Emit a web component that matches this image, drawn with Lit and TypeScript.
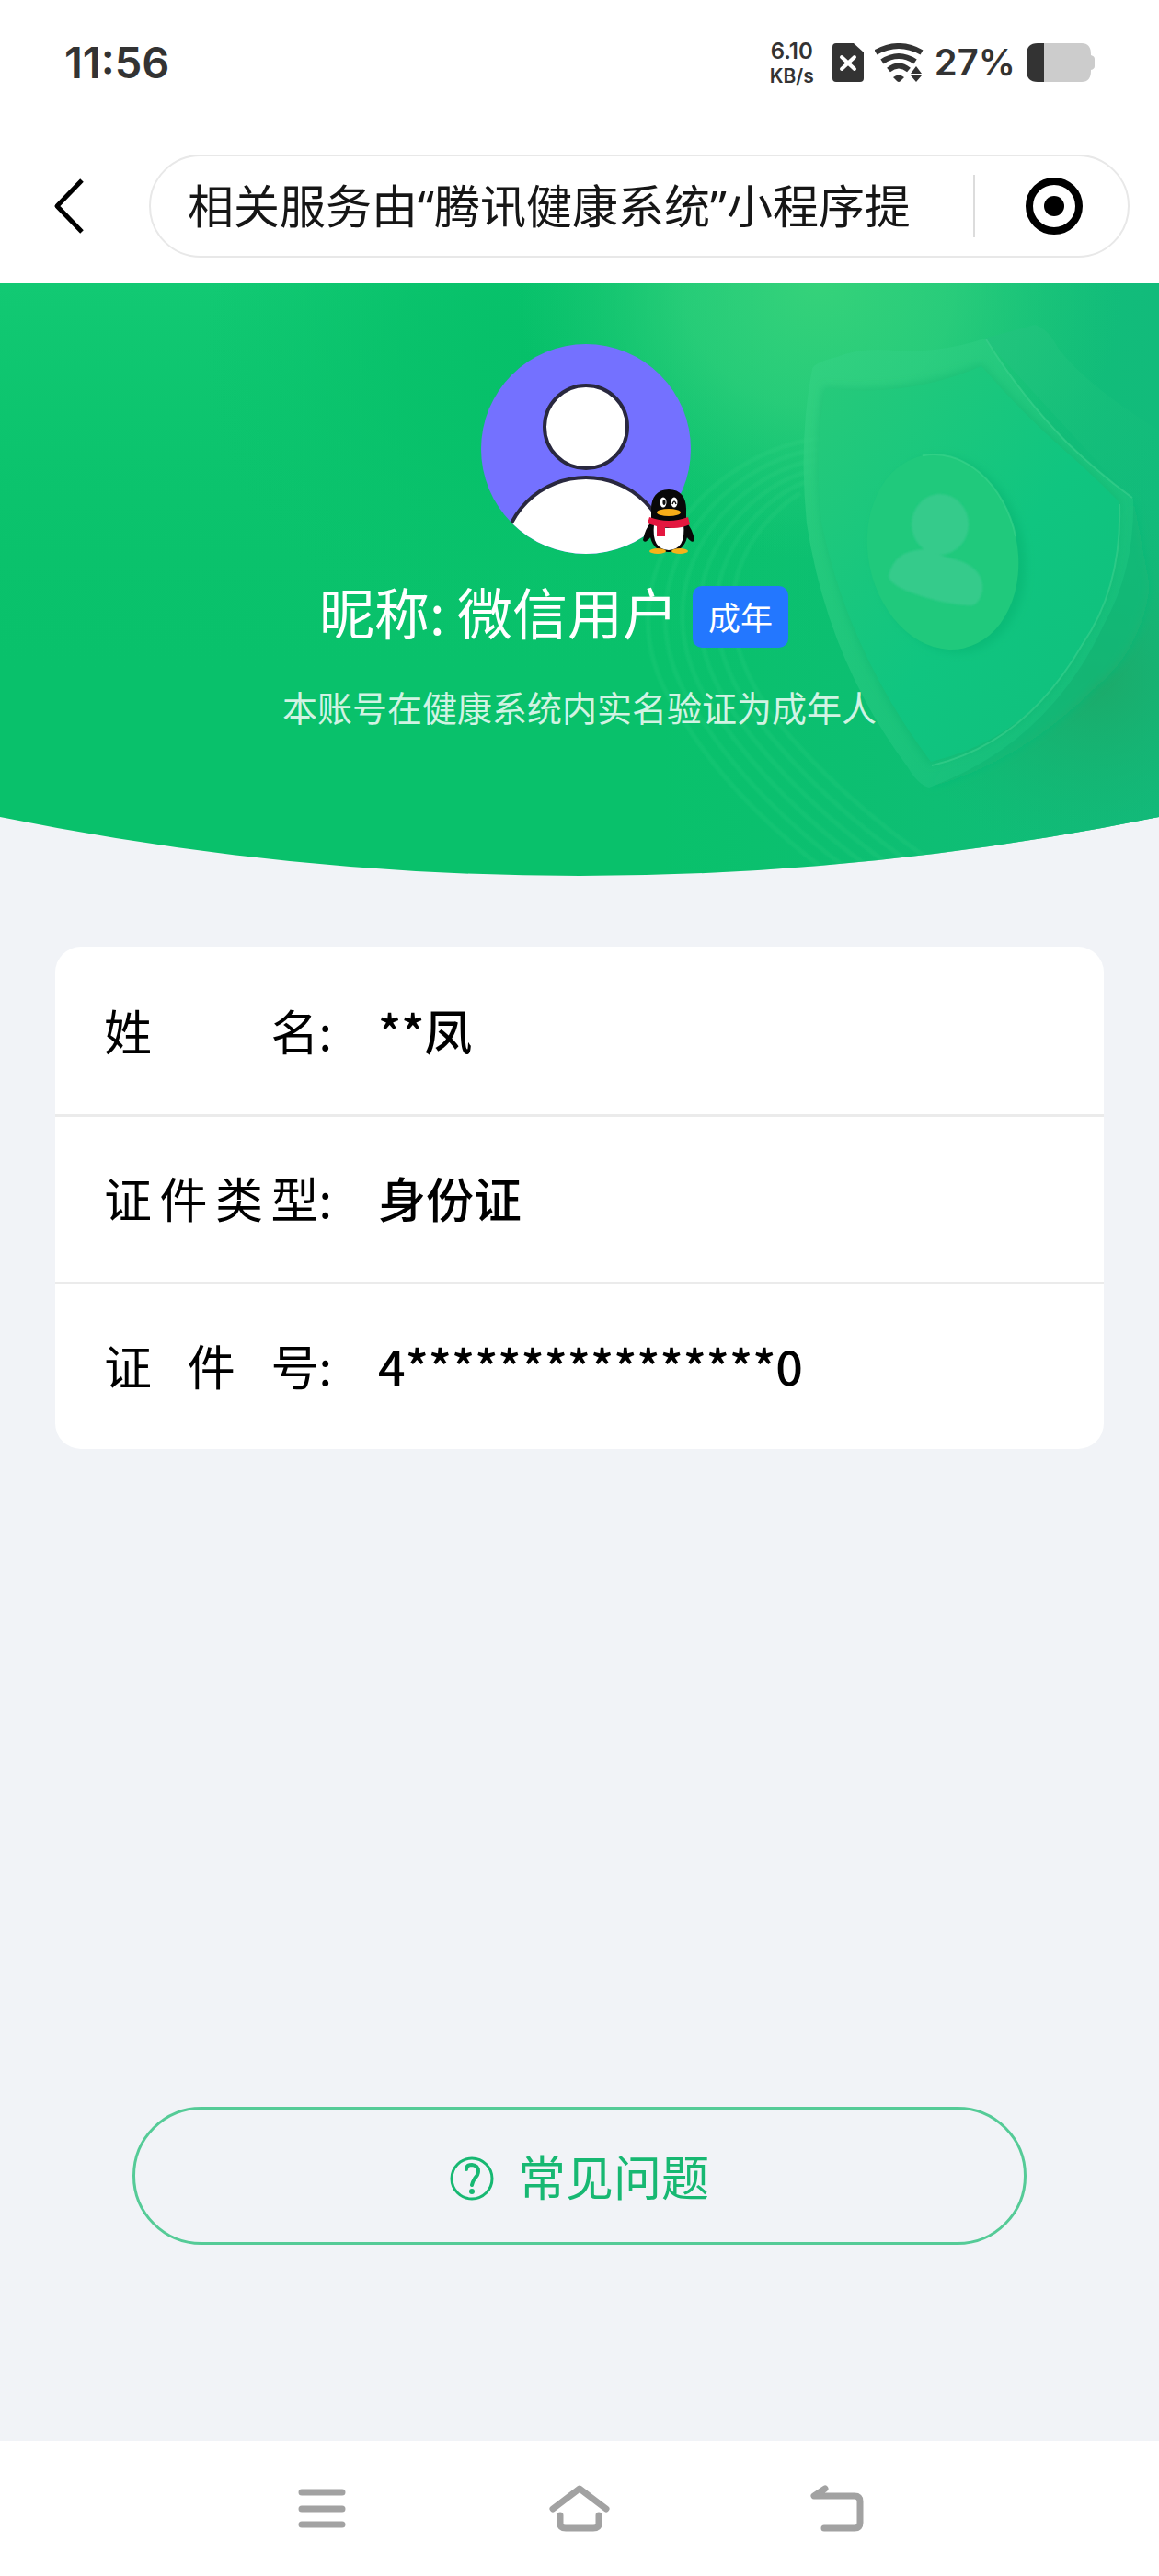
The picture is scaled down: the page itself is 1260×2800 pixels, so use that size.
import { LitElement, html, svg, css } from 'lit';
import { customElement, property } from 'lit/decorators.js';

const FONT = css`'Noto Sans CJK SC', 'Noto Sans', sans-serif`;

@customElement('status-bar')
class StatusBar extends LitElement {
  static styles = css`
    :host {
      display: flex;
      align-items: center;
      justify-content: space-between;
      height: 136px;
      padding: 0 70px;
      box-sizing: border-box;
      color: #333;
      font-family: Inter, sans-serif;
      font-weight: 600;
    }
    .time {
      font-size: 47px;
      line-height: 56px;
    }
    .right {
      display: flex;
      align-items: center;
    }
    .speed {
      display: flex;
      flex-direction: column;
      text-align: center;
      font-size: 21px;
      line-height: 26px;
      margin-right: 20px;
    }
    .speed .rate {
      font-size: 24px;
      line-height: 29px;
    }
    .sim {
      margin-right: 12px;
    }
    .percent {
      font-size: 40px;
      line-height: 56px;
      margin: 0 12px;
    }
    svg {
      display: block;
    }
  `;
  render() {
    return html`
      <span class="time">11:56</span>
      <div class="right">
        <span class="speed"><span class="rate">6.10</span><span>KB/s</span></span>
        <svg class="sim" width="34" height="42" viewBox="0 0 34 42">
          <path d="M4 0H23L34 10V38Q34 42 30 42H4Q0 42 0 38V4Q0 0 4 0Z" fill="#333" />
          <path d="M10 15L24 28M24 15L10 28" stroke="#fff" stroke-width="4" stroke-linecap="round" />
        </svg>
        <svg width="53" height="42" viewBox="0 0 53 42">
          <g fill="none" stroke="#333" stroke-width="6">
            <path d="M1 10Q26 -4 51 10" />
            <path d="M8 20Q26 8 44 20" />
            <path d="M15 29Q26 20 37 29" />
          </g>
          <path d="M20 37Q26 32 32 37L28 41Q26 43 24 41Z" fill="#333" />
          <path d="M45 25L51 33H39ZM39 35H51L45 42Z" fill="#333" />
        </svg>
        <span class="percent">27%</span>
        <svg width="74" height="42" viewBox="0 0 74 42">
          <path d="M19 0H60Q70 0 70 12V13Q74 14 74 17V25Q74 28 70 29V30Q70 42 60 42H19Z" fill="#ccc" />
          <path d="M19 0H12Q0 0 0 12V30Q0 42 12 42H19Z" fill="#333" />
        </svg>
      </div>
    `;
  }
}

@customElement('title-bar')
class TitleBar extends LitElement {
  static styles = css`
    :host {
      display: flex;
      align-items: center;
      gap: 70px;
      padding: 32px 32px 28px 58px;
      font-family: ${FONT};
    }
    button {
      border: 0;
      padding: 0;
      background: none;
      cursor: pointer;
    }
    svg {
      display: block;
    }
    .capsule {
      flex: 1;
      min-width: 0;
      display: flex;
      align-items: center;
      height: 112px;
      box-sizing: border-box;
      border: 2px solid #e8e8e8;
      border-radius: 56px;
      padding: 0 48px 0 40px;
    }
    h1 {
      flex: 1;
      min-width: 0;
      margin: 0;
      overflow: hidden;
      white-space: nowrap;
      font-family: 'Noto Sans', 'Noto Sans CJK SC', sans-serif;
      font-size: 50px;
      line-height: 76px;
      font-weight: 400;
      color: #161616;
    }
    .close {
      border-left: 2px solid #dcdcdc;
      padding: 2px 0 2px 54px;
    }
  `;
  render() {
    return html`
      <button aria-label="返回">
        <svg width="34" height="60" viewBox="0 0 34 60">
          <path d="M31 2L4 30L31 58" fill="none" stroke="#000" stroke-width="5" stroke-linejoin="round" />
        </svg>
      </button>
      <div class="capsule">
        <h1>相关服务由“腾讯健康系统”小程序提</h1>
        <button class="close" aria-label="关闭">
          <svg width="64" height="64" viewBox="0 0 64 64">
            <circle cx="32" cy="32" r="27" fill="none" stroke="#000" stroke-width="8" />
            <circle cx="32" cy="32" r="11" />
          </svg>
        </button>
      </div>
    `;
  }
}

const ripples = [0, 1, 2, 3, 4, 5].map(
  (i) => svg`<path d="M${900 - i * 6} ${168 + i * 12}C${770 + i * 14} ${176 + i * 14} ${640 + i * 20} ${330} ${
    740 + i * 20
  } ${470}C${770 + i * 22} ${520} ${820 + i * 24} ${580} ${900 + i * 26} ${640}" />`,
);

@customElement('hero-backdrop')
class HeroBackdrop extends LitElement {
  static styles = css`
    :host,
    svg {
      display: block;
      width: 100%;
      height: 100%;
    }
  `;
  render() {
    return html`
      <svg viewBox="0 0 1260 644" preserveAspectRatio="none" aria-hidden="true">
        <defs>
          <clipPath id="curve"><path d="M0 0H1260V580Q630 708 0 580Z" /></clipPath>
          <radialGradient id="glow"><stop offset="0" stop-color="#35d27a" /><stop offset=".45" stop-color="#32d07c" stop-opacity=".7" /><stop offset="1" stop-color="#20c878" stop-opacity="0" /></radialGradient>
          <linearGradient id="left" x1="0" x2="0" y1="0" y2="1"><stop offset="0" stop-color="#12c973" /><stop offset="1" stop-color="#0ac36c" stop-opacity="0" /></linearGradient>
          <radialGradient id="valley"><stop offset="0" stop-color="#06c069" /><stop offset=".4" stop-color="#06c069" stop-opacity=".7" /><stop offset="1" stop-color="#09c26b" stop-opacity="0" /></radialGradient>
          <linearGradient id="side" x1="0" x2="1" y1="0" y2="0"><stop offset="0" stop-color="#12bc7b" stop-opacity="0" /><stop offset="1" stop-color="#12bb7b" /></linearGradient>
          <radialGradient id="shade"><stop offset="0" stop-color="#1caa6a" /><stop offset="1" stop-color="#14b474" stop-opacity="0" /></radialGradient>
          <linearGradient id="rim" x1="0" x2="1" y1="0" y2="1"><stop offset="0" stop-color="#34d282" /><stop offset="1" stop-color="#10bd7c" /></linearGradient>
          <linearGradient id="face" x1="0" x2="1" y1="0" y2="1"><stop offset="0" stop-color="#27ca7a" /><stop offset=".55" stop-color="#10c580" /><stop offset="1" stop-color="#10bf7c" /></linearGradient>
          <linearGradient id="slab" x1="0" x2="1" y1="0" y2="1"><stop offset="0" stop-color="#22c47d" /><stop offset="1" stop-color="#12bd7b" stop-opacity="0" /></linearGradient>
          <filter id="soft" x="-20%" y="-20%" width="140%" height="140%"><feGaussianBlur stdDeviation="5" /></filter>
          <filter id="fine"><feGaussianBlur stdDeviation="1" /></filter>
        </defs>
        <g clip-path="url(#curve)">
          <rect width="1260" height="644" fill="#09c16b" />
          <rect width="1260" height="420" fill="url(#left)" />
          <ellipse cx="580" cy="80" rx="360" ry="360" fill="url(#valley)" />
          <rect x="720" width="540" height="644" fill="url(#side)" />
          <ellipse cx="890" cy="0" rx="330" ry="300" fill="url(#glow)" />
          <ellipse cx="1190" cy="430" rx="210" ry="200" fill="url(#shade)" />
          <g fill="none" stroke="#4bdc91" stroke-opacity=".12" stroke-width="5" filter="url(#fine)">${ripples}</g>
          <path d="M1070 60L1125 45Q1140 50 1150 70Q1180 110 1260 160V250L1228 232Z" fill="url(#slab)" />
          <path d="M1232 234L1250 330Q1240 400 1190 440Q1110 520 1010 548Z" fill="#13b978" fill-opacity=".7" filter="url(#soft)" />
          <path d="M883 93Q885 86 910 80Q940 68 980 74Q1030 74 1070 60Q1110 122 1160 173Q1195 207 1232 234Q1234 310 1200 371Q1140 500 1010 548Q998 545 987 526Q900 410 877 261Q868 170 883 93Z" fill="url(#rim)" fill-opacity=".75" />
          <path d="M895 112Q980 122 1067 87Q1110 135 1160 180Q1190 208 1217 236Q1220 330 1177 392Q1120 500 1010 523Q920 400 893 260Q883 180 895 112Z" fill="#0ba968" fill-opacity=".3" filter="url(#soft)" />
          <path d="M897 114Q985 125 1067 90Q1110 140 1160 184Q1190 210 1217 238Q1220 330 1177 392Q1120 495 1012 520Q922 400 893 260Q885 180 897 114Z" fill="url(#face)" />
          <g fill="none" stroke="#4fda99" stroke-opacity=".4" stroke-width="2">
            <path d="M1072 61Q1110 122 1160 173Q1195 207 1231 233" />
            <path d="M1217 240Q1220 330 1177 392Q1115 500 1013 524" />
          </g>
          <g transform="rotate(-12 1025 292)">
            <ellipse cx="1031" cy="296" rx="82" ry="108" fill="#0aa868" fill-opacity=".35" filter="url(#soft)" />
            <ellipse cx="1025" cy="292" rx="81" ry="107" fill="#20c97c" />
            <path d="M1025 185A81 107 0 0 1 1106 292" fill="none" stroke="#42d88f" stroke-opacity=".5" stroke-width="2" />
          </g>
          <g fill="#35cb8b" filter="url(#fine)">
            <ellipse cx="1022" cy="262" rx="31" ry="33" />
            <path d="M966 318Q972 290 1005 289Q1025 297 1045 302Q1070 312 1068 334Q1064 352 1052 350Q1020 348 985 334Q967 326 966 318Z" />
          </g>
        </g>
      </svg>
    `;
  }
}

@customElement('profile-hero')
class ProfileHero extends LitElement {
  static styles = css`
    :host {
      display: block;
      position: relative;
      font-family: ${FONT};
      color: #fff;
    }
    hero-backdrop {
      position: absolute;
      inset: 0;
    }
    .content {
      position: relative;
      display: flex;
      flex-direction: column;
      align-items: center;
      padding: 66px 0 156px;
    }
    .avatar {
      position: relative;
      margin-left: 14px;
    }
    svg {
      display: block;
    }
    .badge {
      position: absolute;
      right: -4px;
      bottom: 0;
    }
    .name {
      display: flex;
      align-items: flex-end;
      gap: 16px;
      margin: 22px 56px 0 0;
    }
    h2 {
      margin: 0;
      font-size: 60px;
      line-height: 80px;
      font-weight: 400;
    }
    .tag {
      padding: 8px 17px 9px;
      border-radius: 10px;
      background: #2377ff;
      font-size: 35px;
      line-height: 50px;
    }
    p {
      margin: 36px 0 0;
      font-size: 38px;
      line-height: 56px;
      color: rgba(255, 255, 255, 0.82);
    }
  `;
  render() {
    return html`
      <hero-backdrop></hero-backdrop>
      <div class="content">
        <div class="avatar">
          <svg width="228" height="228" viewBox="0 0 228 228" role="img" aria-label="头像">
            <defs><clipPath id="round"><circle cx="114" cy="114" r="114" /></clipPath></defs>
            <g clip-path="url(#round)">
              <rect width="228" height="228" fill="#7471ff" />
              <g fill="#fff" stroke="#29283f" stroke-width="4">
                <circle cx="114" cy="90" r="45" />
                <circle cx="114" cy="236" r="91" />
              </g>
            </g>
          </svg>
          <svg class="badge" width="56" height="70" viewBox="0 0 56 70" aria-hidden="true">
            <path d="M10 34Q2 43 0 55Q2 60 9 51ZM46 34Q54 43 56 55Q54 60 47 51Z" fill="#080808" />
            <path d="M28 0C15 0 9 9 9 21V32Q6 40 8 52Q12 68 28 68Q44 68 48 52Q50 40 47 32V21C47 9 41 0 28 0Z" fill="#080808" />
            <ellipse cx="16" cy="67" rx="9" ry="3" fill="#f6b31a" />
            <ellipse cx="40" cy="67" rx="9" ry="3" fill="#f6b31a" />
            <path d="M12 38Q28 46 44 38Q47 65 28 66Q9 65 12 38Z" fill="#fff" />
            <path d="M7 30Q28 38 49 30L51 38Q38 44 24 41V51H15V40L5 37Z" fill="#e4173f" />
            <ellipse cx="28" cy="25" rx="13" ry="4" fill="#f8ad18" />
            <ellipse cx="22" cy="14" rx="3.5" ry="5.5" fill="#fff" />
            <ellipse cx="34" cy="14" rx="3.5" ry="5.5" fill="#fff" />
            <ellipse cx="23" cy="14" rx="1.6" ry="3" fill="#111" />
            <path d="M32 16Q34 10 36 16" fill="none" stroke="#111" stroke-width="1.5" />
          </svg>
        </div>
        <div class="name">
          <h2>昵称: 微信用户</h2>
          <span class="tag">成年</span>
        </div>
        <p>本账号在健康系统内实名验证为成年人</p>
      </div>
    `;
  }
}

@customElement('info-card')
class InfoCard extends LitElement {
  @property({ attribute: false }) rows: [string, string][] = [];
  static styles = css`
    :host {
      display: block;
      border-radius: 28px;
      background: #fff;
      font-family: ${FONT};
      color: #000;
      font-size: 52px;
      line-height: 76px;
    }
    dl {
      margin: 0;
    }
    .row {
      display: flex;
      padding: 53px;
    }
    .row + .row {
      border-top: 3px solid #ebebeb;
      padding-top: 50px;
    }
    dt {
      display: flex;
      width: 248px;
      margin-right: 50px;
    }
    .label {
      display: flex;
      justify-content: space-between;
      width: 234px;
    }
    dd {
      margin: 0;
      font-weight: 500;
    }
  `;
  render() {
    return html`
      <dl>
        ${this.rows.map(
          ([label, value]) => html`
            <div class="row">
              <dt><span class="label">${[...label].map((c) => html`<span>${c}</span>`)}</span>:</dt>
              <dd>${value}</dd>
            </div>
          `,
        )}
      </dl>
    `;
  }
}

@customElement('system-nav')
class SystemNav extends LitElement {
  static styles = css`
    :host {
      display: block;
      background: #fff;
    }
    nav {
      display: grid;
      grid-template-columns: repeat(3, 1fr);
      width: 66.67%;
      margin: 0 auto;
      padding: 40px 0 39px;
    }
    button {
      display: flex;
      justify-content: center;
      border: 0;
      padding: 0;
      background: none;
      cursor: pointer;
    }
    svg {
      fill: none;
      stroke: #a2a2a2;
      stroke-width: 7;
      stroke-linecap: round;
      stroke-linejoin: round;
    }
  `;
  render() {
    return html`
      <nav>
        <button aria-label="最近任务">
          <svg width="68" height="68" viewBox="0 0 68 68"><path d="M12 16H56M12 34H56M12 51H56" /></svg>
        </button>
        <button aria-label="主屏幕">
          <svg width="68" height="68" viewBox="0 0 68 68">
            <path d="M5 34L34 12L63 34M13 41V50Q13 55 19 55H49Q55 55 55 50V41" />
          </svg>
        </button>
        <button aria-label="返回">
          <svg width="68" height="68" viewBox="0 0 68 68">
            <path d="M21 12L9 20H53Q59 20 59 26V49Q59 55 53 55H20" />
          </svg>
        </button>
      </nav>
    `;
  }
}

@customElement('app-root')
class AppRoot extends LitElement {
  static styles = css`
    :host {
      display: flex;
      flex-direction: column;
      min-height: 100vh;
      background: #f1f3f7;
      font-family: ${FONT};
    }
    header {
      background: #fff;
    }
    main {
      flex: 1;
      display: flex;
      flex-direction: column;
    }
    info-card {
      margin: 77px 60px 60px;
    }
    .faq {
      display: flex;
      align-items: center;
      justify-content: center;
      gap: 26px;
      height: 150px;
      margin: auto 144px 213px;
      border: 3px solid #55cb97;
      border-radius: 75px;
      background: none;
      color: #17b872;
      font-family: inherit;
      font-size: 52px;
      line-height: 76px;
      cursor: pointer;
    }
    .faq svg {
      display: block;
    }
  `;
  private rows: [string, string][] = [
    ['姓名', '**凤'],
    ['证件类型', '身份证'],
    ['证件号', '4****************0'],
  ];
  render() {
    return html`
      <header>
        <status-bar></status-bar>
        <title-bar></title-bar>
      </header>
      <main>
        <profile-hero></profile-hero>
        <info-card .rows=${this.rows}></info-card>
        <button class="faq">
          <svg width="48" height="54" viewBox="0 -6 48 54" fill="none" stroke="#17b872" stroke-width="3" aria-hidden="true">
            <circle cx="24" cy="24" r="22" />
            <path d="M18 14Q18 9 24 9Q31 10 31 16Q31 20 27 24Q25 27 24 31" stroke-width="4" stroke-linecap="round" />
            <circle cx="24" cy="38" r="3" fill="#17b872" stroke="none" />
          </svg>
          常见问题
        </button>
      </main>
      <system-nav></system-nav>
    `;
  }
}
